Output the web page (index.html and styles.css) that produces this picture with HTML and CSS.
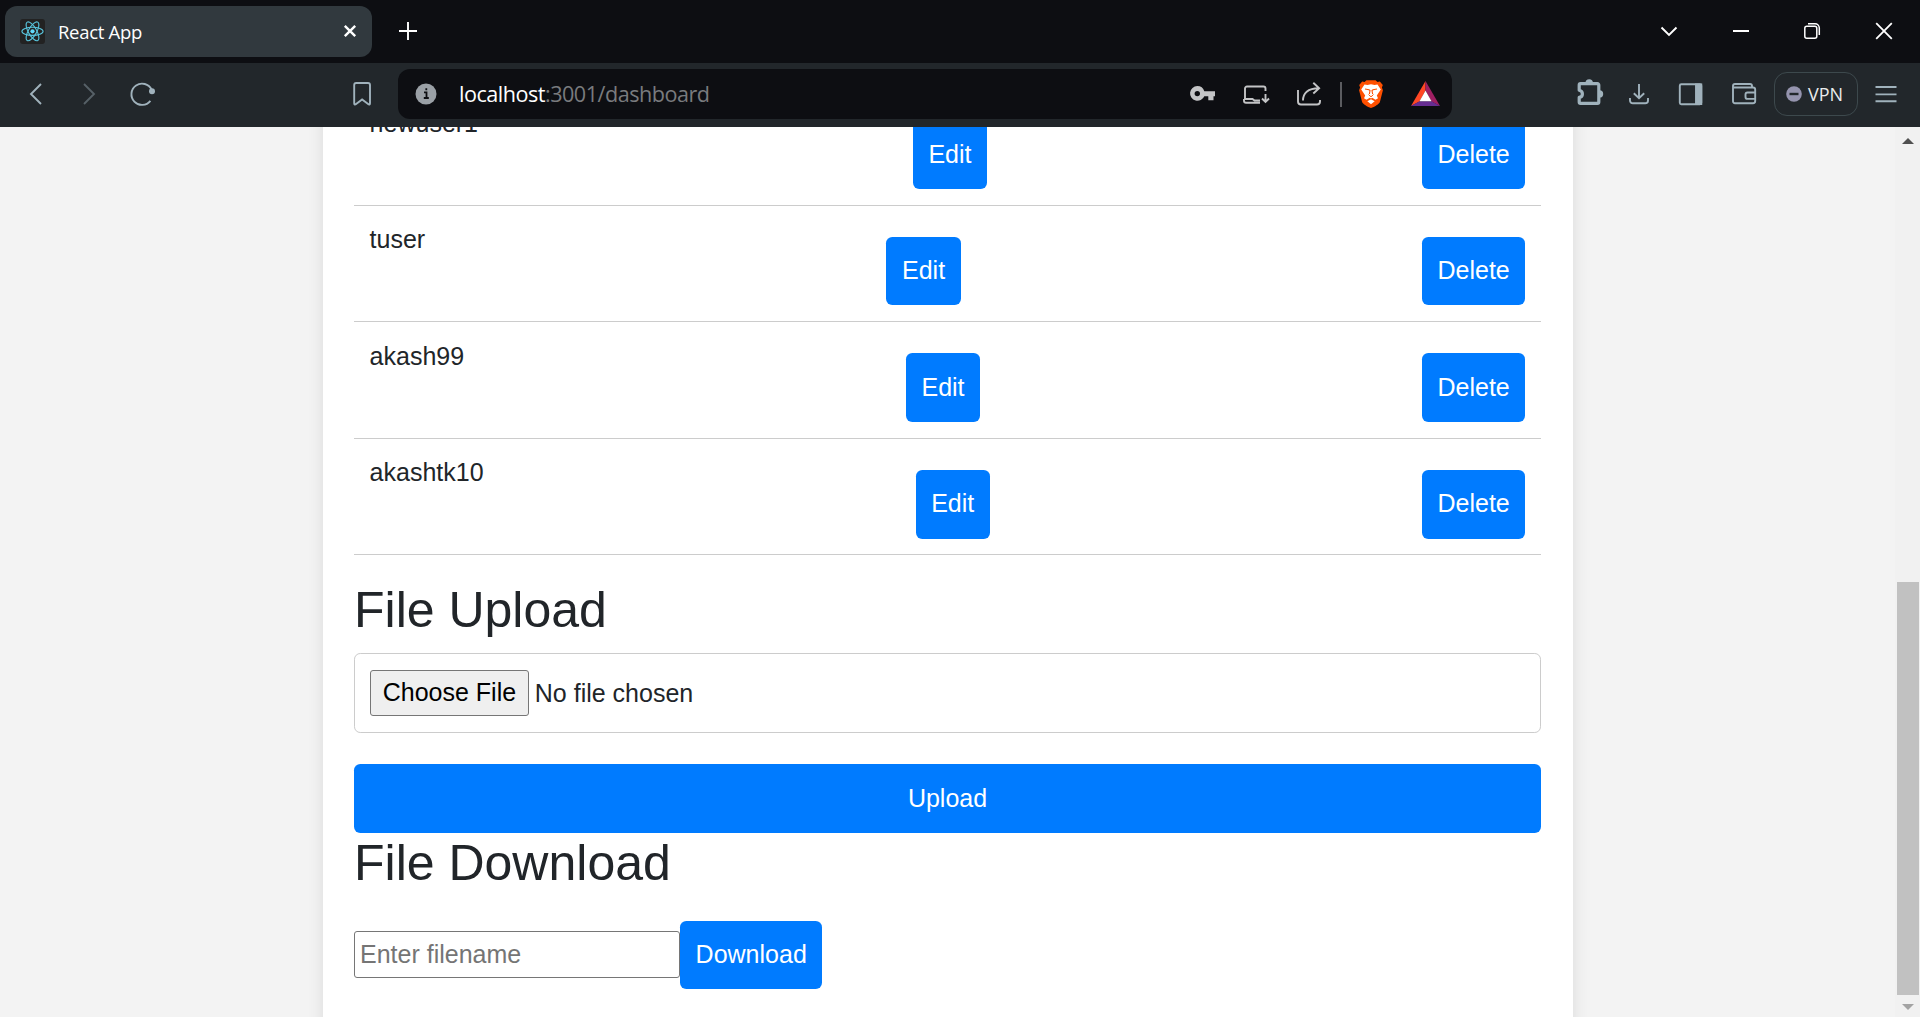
FILE: index.html
```html
<!DOCTYPE html>
<html lang="en">
<head>
<meta charset="utf-8">
<title>React App</title>
<link rel="stylesheet" href="styles.css">
</head>
<body>
<div class="tabstrip">
  <div class="tab">
    <svg class="favicon" viewBox="0 0 25 25"><rect width="25" height="25" rx="3" fill="#222"/><g fill="none" stroke="#58c4dc" stroke-width="1.1"><ellipse cx="12.5" cy="12.3" rx="10.6" ry="4.1"/><ellipse cx="12.5" cy="12.3" rx="10.6" ry="4.1" transform="rotate(60 12.5 12.3)"/><ellipse cx="12.5" cy="12.3" rx="10.6" ry="4.1" transform="rotate(120 12.5 12.3)"/></g><circle cx="12.5" cy="12.3" r="2.1" fill="#61dafb"/></svg>
    <span class="tab-title">React App</span>
    <svg class="tab-close" viewBox="0 0 14 14"><path d="M1.8 1.8l10.4 10.4M12.2 1.8L1.8 12.2" stroke="#fff" stroke-width="2.4"/></svg>
  </div>
  <svg class="new-tab" viewBox="0 0 20 20"><path d="M10 1v18M1 10h18" stroke="#fff" stroke-width="1.9"/></svg>
  <div class="window-controls">
    <svg viewBox="0 0 20 20"><path d="M2.5 6.5l7.5 7.5 7.5-7.5" fill="none" stroke="#fff" stroke-width="1.9"/></svg>
    <svg viewBox="0 0 20 20"><path d="M2 10h16" stroke="#fff" stroke-width="2"/></svg>
    <svg viewBox="0 0 20 20"><g fill="none" stroke="#fff" stroke-width="1.5"><rect x="2.8" y="5.3" width="12" height="12" rx="2"/><path d="M6 2.800h7a4.300 4.300 0 0 1 4.300 4.300v7"/></g></svg>
    <svg viewBox="0 0 20 20"><path d="M2.2 2.2l15.6 15.6M17.8 2.2L2.2 17.8" stroke="#fff" stroke-width="1.8"/></svg>
  </div>
</div>
<div class="toolbar">
  <svg class="icon back" viewBox="0 0 30 30"><path d="M20 5L10 15l10 10" /></svg>
  <svg class="icon forward" viewBox="0 0 30 30"><path d="M10 5l10 10-10 10"/></svg>
  <svg class="icon reload" viewBox="0 0 30 30"><path d="M23.6 10.700A10.600 10.600 0 1 0 22.400 21.800"/><circle cx="24" cy="12.300" r="3" fill="#a0b2bc" stroke="none"/></svg>
  <svg class="icon bookmark" viewBox="0 0 30 30"><path d="M7.2 24.2V6a2 2 0 0 1 2-2H21a2 2 0 0 1 2 2v18.200c0 1.600-.9 1.700-1.900.8L15.100 20.500 9.100 25c-1 .9-1.900.8-1.900-.8z"/></svg>
  <div class="address">
    <svg class="info" viewBox="0 0 22 22"><circle cx="11" cy="11" r="10.500" fill="#9aa0a6"/><path d="M9 9.300h2.500V14M8.800 15h5M11.300 5.200v2" fill="none" stroke="#0d0e12" stroke-width="1.800"/></svg>
    <span class="url"><b>localhost</b>:3001/dashboard</span>
    <svg class="icon key" viewBox="0 0 30 30"><path fill="#c3c4c6" stroke="none" fill-rule="evenodd" d="M9.300 7a7.400 7.400 0 0 1 7 5.200H27v5h-1.500v4h-5.200v-4h-4A7.400 7.400 0 1 1 9.300 7zm0 4.900a2.700 2.700 0 1 0 0 5.400 2.700 2.700 0 0 0 0-5.400z"/></svg>
    <svg class="icon light laptop" viewBox="0 0 30 30"><path d="M4 20V9.500a2 2 0 0 1 2-2h16.500a2 2 0 0 1 2 2v2.500M3 20h8.500l2 1.500h5.500M3 20v1.700a2 2 0 0 0 2 2h14M24.500 15v8M21 19.500l3.500 3.500 3.500-3.500"/></svg>
    <svg class="icon light share" viewBox="0 0 30 30"><path d="M4 11v11.500a3 3 0 0 0 3 3h16a3 3 0 0 0 3-3V21M9 21.500c0-7 4.500-12.300 16-12.300M19.300 3.800l5.800 5.400-5.800 5.300"/></svg>
    <span class="divider"></span>
    <svg class="icon brave" viewBox="0 0 30 30"><path d="M8.500 3l2-1.700h9l2 1.700 2.300-.5 3 3.600-.9 2.300 1 2.800-3 11.800c-.5 1.800-5.500 5-8.900 6-3.400-1-8.400-4.200-8.900-6l-3-11.800 1-2.800-.9-2.300 3-3.600z" fill="#ff5000" stroke="none"/><path d="M8.500 5.500l3 .6 3.500-.8 3.500.8 3-.6 3.300 5-4 6 1.200 2.800-2.500 1.500-3.300-2-1.200.6-1.200-.6-3.300 2L8 19.300l1.200-2.800-4-6z" fill="#fff" stroke="none"/><path d="M9 10l4 .8 1 .8-.6 3.400M21 10l-4 .8-1 .8.600 3.400" stroke="#ff5000" stroke-width="1.100"/><path d="M12.500 15.500L15 17.800l2.500-2.300" stroke="#ff5000" stroke-width="1"/><path d="M11.300 22.300L15 20.300l3.700 2L15 25.200z" fill="#fff" stroke="none"/></svg>
    <svg class="icon bat" viewBox="0 0 30 30"><g stroke="none"><path d="M14.500 2v9.500L8.500 22.500 0 27z" fill="#ff4724"/><path d="M14.500 2v9.500L20.500 22.500 29 27z" fill="#9e1f63"/><path d="M0 27l8.500-4.800h12L29 27z" fill="#662d91"/><path d="M14.500 11.500l6 10.700h-12z" fill="#fff"/></g></svg>
  </div>
  <svg class="icon puzzle" viewBox="0 0 30 30"><path stroke-width="3.200" stroke-linejoin="round" d="M5.500 4.700h17a1.300 1.300 0 0 1 1.300 1.300v17a1.300 1.300 0 0 1-1.300 1.300h-17a1.300 1.300 0 0 1-1.300-1.300v-4.600q3.200-.5 3.200-3.500T4.200 11.200V6a1.300 1.300 0 0 1 1.300-1.300z"/><path stroke="none" fill="#a0b2bc" d="M10.500 4a3.700 3.700 0 0 1 7.400 0zM24.500 11.200a3.700 3.700 0 0 1 0 7.400z"/></svg>
  <svg class="icon download-icon" viewBox="0 0 30 30"><path d="M15 5v14M9.800 14.300l5.200 5 5.200-5M6 19v2.500a2.800 2.800 0 0 0 2.800 2.800h12.400a2.800 2.800 0 0 0 2.800-2.800V19"/></svg>
  <svg class="icon panel" viewBox="0 0 30 30"><rect x="4.800" y="5.200" width="21.500" height="20" rx="1.500"/><path d="M21 5.500h5.300v19.500H21z" fill="#a0b2bc"/></svg>
  <svg class="icon wallet" viewBox="0 0 30 30"><path d="M4 8.800V7a2 2 0 0 1 2-2h15a2 2 0 0 1 2 2v1.800M4 8.500h20a2.200 2.200 0 0 1 2.200 2.200V22a2.200 2.200 0 0 1-2.200 2.200H6A2 2 0 0 1 4 22zM26.500 13.500H18.500a2 2 0 0 0-2 2v2.400a2 2 0 0 0 2 2h8"/></svg>
  <div class="vpn"><svg viewBox="0 0 16 16"><circle cx="8" cy="8" r="7.800" fill="#9594ae"/><path d="M3.500 8h9" stroke="#22272b" stroke-width="2.400"/></svg><span>VPN</span></div>
  <svg class="icon menu" viewBox="0 0 30 30"><path d="M4.500 8h21M4.500 15.400h21M4.500 22.200h21"/></svg>
</div>
<div class="viewport">
  <main class="page">
    <div class="card">
      <ul class="users">
        <li><span>newuser1</span><button>Edit</button><button>Delete</button></li>
        <li><span>tuser</span><button>Edit</button><button>Delete</button></li>
        <li><span>akash99</span><button>Edit</button><button>Delete</button></li>
        <li><span>akashtk10</span><button>Edit</button><button>Delete</button></li>
      </ul>
      <h2>File Upload</h2>
      <div class="file-field"><span class="choose">Choose File</span><span class="file-name">No file chosen</span></div>
      <button class="upload">Upload</button>
      <h2>File Download</h2>
      <div class="download-row"><input type="text" placeholder="Enter filename"><button>Download</button></div>
    </div>
  </main>
  <div class="scrollbar">
    <svg viewBox="0 0 12 6"><path d="M0 6l6-6 6 6z" fill="#505050"/></svg>
    <div class="thumb"></div>
    <svg viewBox="0 0 12 6"><path d="M0 0h12L6 6z" fill="#a3a3a3"/></svg>
  </div>
</div>
</body>
</html>
```

FILE: styles.css
```css
* { box-sizing: border-box; }
body {
  margin: 0;
  height: 1017px;
  display: flex;
  flex-direction: column;
  overflow: hidden;
  background: #f3f3f3;
  font-family: "Liberation Sans", Arial, sans-serif;
}
svg { display: block; flex: none; }

/* Browser tabs */
.tabstrip {
  height: 63px;
  flex: none;
  display: flex;
  align-items: center;
  padding: 0 26px 1px 5px;
  background: #0d0e12;
  color: #fff;
  font-family: "Open Sans", "Noto Sans", sans-serif;
}
.tab {
  width: 367px;
  height: 51px;
  display: flex;
  align-items: center;
  padding: 0 15px;
  border-radius: 12px;
  background: #31393e;
}
.favicon { width: 25px; height: 25px; }
.tab-title { margin-left: 13px; font-size: 18.5px; letter-spacing: -0.3px; }
.tab-close { width: 14px; height: 14px; margin-left: auto; }
.new-tab { width: 20px; height: 20px; margin-left: 26px; }
.window-controls { display: flex; gap: 51.7px; margin-left: auto; }
.window-controls svg { width: 20px; height: 20px; }

/* Navigation bar */
.toolbar {
  height: 64px;
  flex: none;
  display: flex;
  align-items: center;
  padding-bottom: 2px;
  background: #22272b;
  font-family: "Open Sans", "Noto Sans", sans-serif;
}
.icon {
  width: 30px;
  height: 30px;
  fill: none;
  stroke: #a0b2bc;
  stroke-width: 1.9;
}
.light { stroke: #c3c4c6; }
.back { margin-left: 21px; }
.forward { margin-left: 23px; stroke: #566067; }
.reload { margin-left: 23.5px; }
.bookmark { margin-left: 189.5px; }
.address {
  width: 1054px;
  height: 50px;
  flex: none;
  display: flex;
  align-items: center;
  margin-left: 21px;
  padding: 0 11px 0 17px;
  border-radius: 12px;
  background: #0d0e12;
}
.info { width: 22px; height: 22px; }
.url {
  margin-left: 22px;
  padding-bottom: 2px;
  font-size: 21.6px;
  letter-spacing: -0.5px;
  color: #797b7e;
  white-space: nowrap;
}
.url b { font-weight: 400; color: #fff; }
.key { margin-left: auto; }
.laptop { margin-left: 23px; }
.share { margin-left: 23px; }
.divider { width: 2px; height: 25px; margin: 0 14px 0 16px; background: #5b5c60; }
.bat { margin-left: 25px; }
.puzzle { margin-left: 123px; }
.download-icon { margin-left: 19px; }
.panel { margin-left: 21px; }
.wallet { margin-left: 24px; }
.vpn {
  width: 84px;
  height: 44px;
  flex: none;
  display: flex;
  align-items: center;
  gap: 6px;
  margin-left: 15px;
  padding-left: 11px;
  border: 1px solid #3d494d;
  border-radius: 13px;
  color: #e9ebec;
  font-size: 18px;
}
.vpn svg { width: 16px; height: 16px; }
.vpn span { padding-bottom: 1px; }
.menu { margin-left: 13px; }

/* Scrolled page */
.viewport { flex: 1; display: flex; min-height: 0; }
.page { flex: 1; display: flex; overflow: hidden; padding-left: 323px; }
.card {
  width: 1250px;
  height: 1000px;
  flex: none;
  margin-top: -38px;
  padding: 0 32px 0 31px;
  background: #fff;
  box-shadow: 0 0 15.6px rgba(0, 0, 0, 0.1);
  color: #212529;
  font-size: 25px;
  line-height: 37.5px;
}
.users { list-style: none; margin: 0 0 25px; padding: 0; }
.users li {
  display: flex;
  justify-content: space-between;
  padding: 15.62px;
  border-bottom: 1px solid #ccc;
}
button {
  margin: 15.62px 0 0;
  padding: 15.62px;
  border: 0;
  border-radius: 6.25px;
  background: #007bff;
  color: #fff;
  font: inherit;
}
h2 { margin: 0 0 12.5px; font-size: 50px; font-weight: 400; line-height: 60px; }
.file-field {
  height: 80px;
  display: flex;
  align-items: center;
  gap: 6px;
  padding: 0 15px;
  border: 1px solid #ccc;
  border-radius: 6.25px;
}
.choose {
  height: 46px;
  padding: 3px 11.7px;
  border: 1px solid #767676;
  border-radius: 3px;
  background: #efefef;
  color: #000;
}
.file-name { padding-top: 2px; }
.upload { display: block; width: 100%; margin-top: 31.25px; }
.download-row { display: flex; align-items: baseline; }
input {
  width: 326px;
  height: 47px;
  padding: 2px 5px;
  border: 1px solid #767676;
  border-radius: 3px;
  font: inherit;
}
input::placeholder { color: #757575; }

.scrollbar {
  width: 25px;
  display: flex;
  flex-direction: column;
  align-items: center;
  padding: 11px 0 7px;
  background: #f1f1f1;
}
.scrollbar svg { width: 12px; height: 6px; }
.thumb { width: 22px; height: 413px; margin: auto 0 9px 1px; background: #c1c1c1; }
```
